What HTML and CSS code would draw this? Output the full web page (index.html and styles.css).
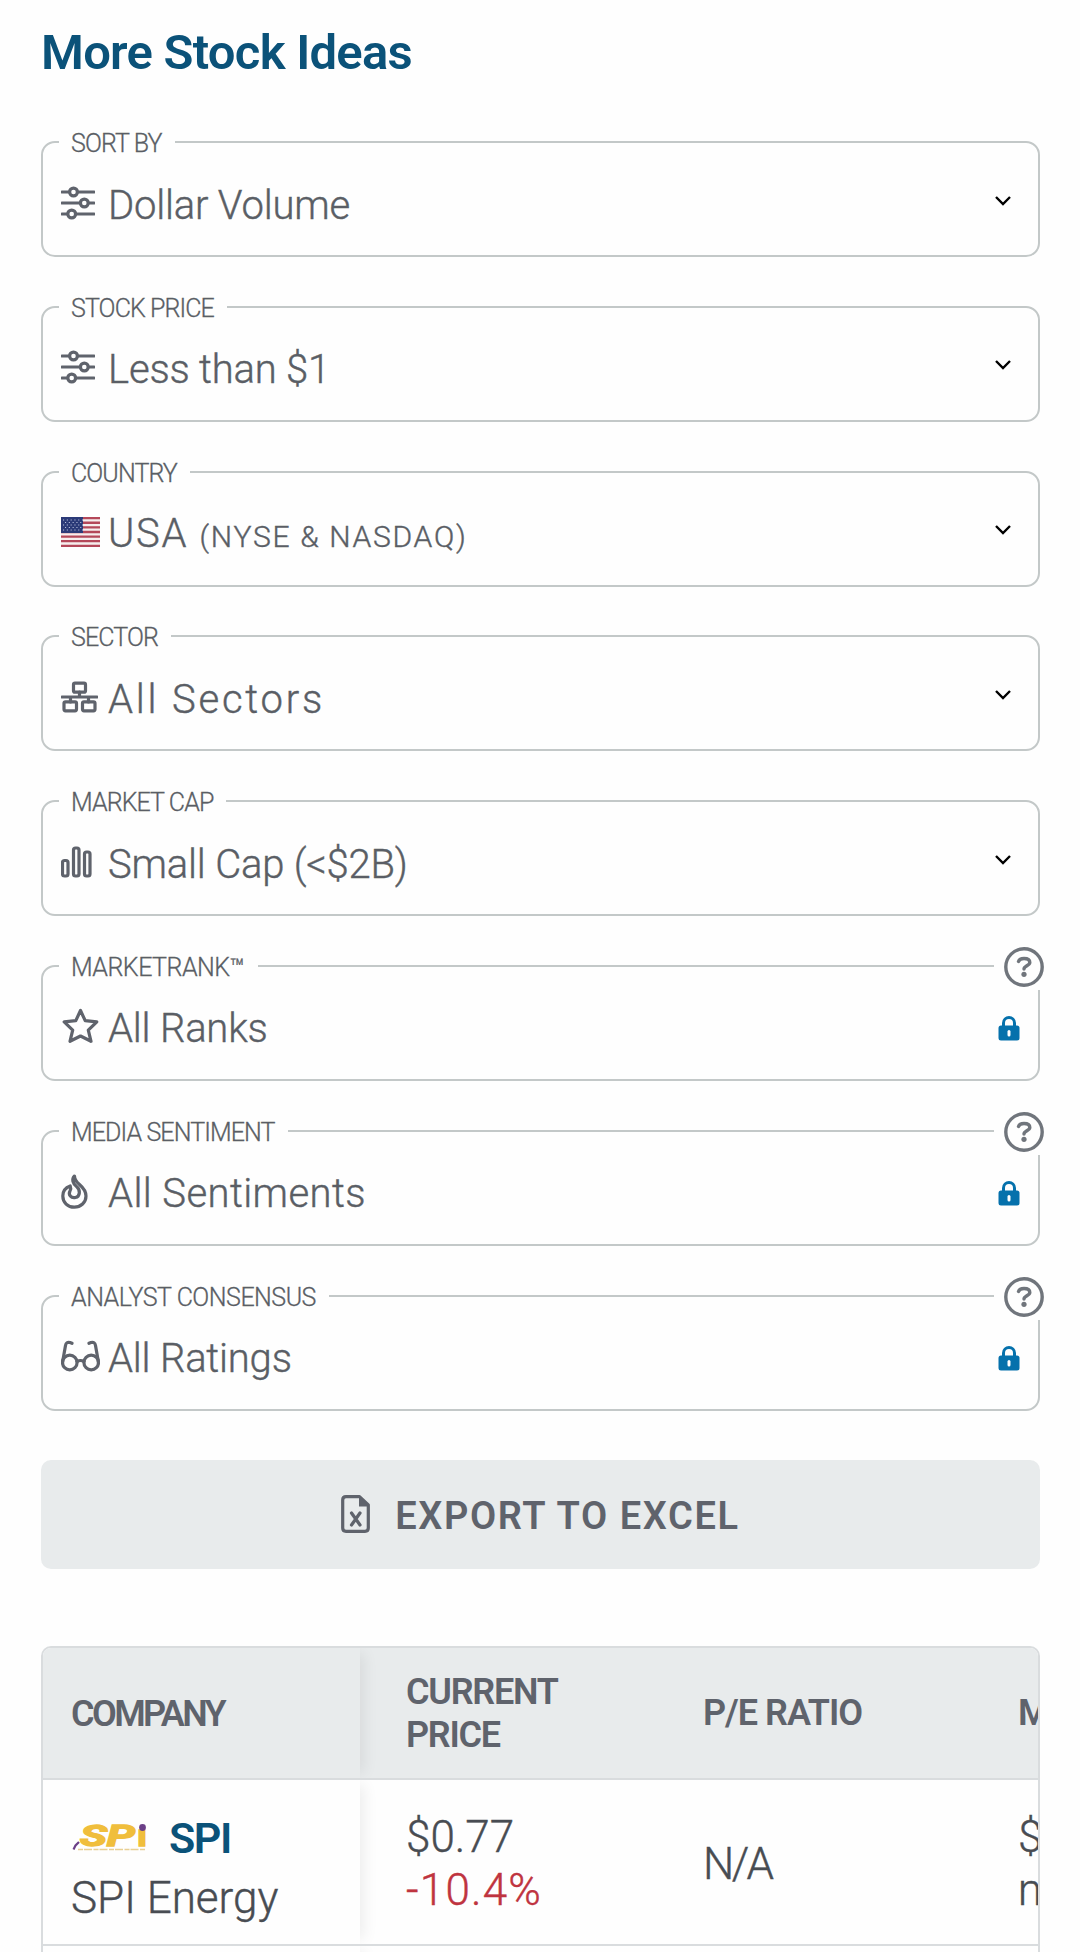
FILE: index.html
```
<!DOCTYPE html>
<html lang="en">
<head>
  <meta charset="utf-8">
  <meta name="viewport" content="width=device-width, initial-scale=1.0">
  <title>More Stock Ideas</title>
  <link rel="stylesheet" href="styles.css">
</head>

<body>
<h2>More Stock Ideas</h2>

<form class="filters">
  <fieldset class="filter">
    <legend>SORT BY</legend>
    <div class="filter-row">
      <span class="filter-icon">
        <svg width="34" height="34" viewBox="0 0 34 34" class="line-icon">
          <path d="M1 6h7.500M17 6h16M1 17h17.500M28 17h5M1 28h5.500M15 28h18"/>
          <circle cx="12.500" cy="6" r="3.900"/><circle cx="23.300" cy="17" r="3.900"/><circle cx="10.700" cy="28" r="3.900"/>
        </svg>
      </span>
      <span class="filter-value">Dollar Volume</span>
      <svg class="chevron" width="18" height="12" viewBox="0 0 18 12"><path d="M2 2l7 7 7-7"/></svg>
    </div>
  </fieldset>

  <fieldset class="filter">
    <legend>STOCK PRICE</legend>
    <div class="filter-row">
      <span class="filter-icon">
        <svg width="34" height="34" viewBox="0 0 34 34" class="line-icon">
          <path d="M1 6h7.500M17 6h16M1 17h17.500M28 17h5M1 28h5.500M15 28h18"/>
          <circle cx="12.500" cy="6" r="3.900"/><circle cx="23.300" cy="17" r="3.900"/><circle cx="10.700" cy="28" r="3.900"/>
        </svg>
      </span>
      <span class="filter-value">Less than $1</span>
      <svg class="chevron" width="18" height="12" viewBox="0 0 18 12"><path d="M2 2l7 7 7-7"/></svg>
    </div>
  </fieldset>

  <fieldset class="filter">
    <legend>COUNTRY</legend>
    <div class="filter-row">
      <span class="filter-icon">
        <svg width="39" height="30" viewBox="0 0 39 30">
          <rect width="39" height="30" fill="#f6eeee"/>
          <path d="M0 1.150h39M0 5.750h39M0 10.350h39M0 15h39M0 19.600h39M0 24.200h39M0 28.850h39" stroke="#b4485a" stroke-width="2.300"/>
          <rect width="22" height="16" fill="#2b3a78"/>
          <path d="M2 3h20M4 5.500h18M2 8h20M4 10.500h18M2 13h20" stroke="#b9c0dc" stroke-width="1.100" stroke-dasharray="1.100 2.700"/>
        </svg>
      </span>
      <span class="filter-value spaced">USA <small>(NYSE &amp; NASDAQ)</small></span>
      <svg class="chevron" width="18" height="12" viewBox="0 0 18 12"><path d="M2 2l7 7 7-7"/></svg>
    </div>
  </fieldset>

  <fieldset class="filter">
    <legend>SECTOR</legend>
    <div class="filter-row">
      <span class="filter-icon">
        <svg width="37" height="32" viewBox="0 0 37 32" class="line-icon">
          <rect x="12.500" y="2.200" width="12" height="9" rx="1.500"/>
          <rect x="3" y="20.800" width="12.500" height="9" rx="1.500"/>
          <rect x="21.500" y="20.800" width="12.500" height="9" rx="1.500"/>
          <path d="M1 16h35M18.500 11v5M9.500 16v5M27.500 16v5"/>
        </svg>
      </span>
      <span class="filter-value sectors">All Sectors</span>
      <svg class="chevron" width="18" height="12" viewBox="0 0 18 12"><path d="M2 2l7 7 7-7"/></svg>
    </div>
  </fieldset>

  <fieldset class="filter">
    <legend>MARKET CAP</legend>
    <div class="filter-row">
      <span class="filter-icon">
        <svg width="31" height="32" viewBox="0 0 31 32" class="line-icon">
          <rect x="1.500" y="14.500" width="5.500" height="15.500" rx="2"/>
          <rect x="12.500" y="2" width="5.500" height="28" rx="2"/>
          <rect x="23.500" y="6" width="5.500" height="24" rx="2"/>
        </svg>
      </span>
      <span class="filter-value">Small Cap (&lt;$2B)</span>
      <svg class="chevron" width="18" height="12" viewBox="0 0 18 12"><path d="M2 2l7 7 7-7"/></svg>
    </div>
  </fieldset>

  <fieldset class="filter">
    <legend class="wide">MARKETRANK™</legend>
    <span class="help">
      <svg width="40" height="40" viewBox="0 0 40 40">
        <circle cx="20" cy="20" r="18.200"/>
        <path d="M14.500 14.500c.8-2.300 2.200-3 5.500-3 3.600 0 5.800 1.500 5.800 4 0 3-5.800 3.600-5.800 6.500"/>
        <circle class="dot" cx="20" cy="27.300" r="2.600"/>
      </svg>
    </span>
    <div class="filter-row">
      <span class="filter-icon">
        <svg width="38" height="36" viewBox="0 0 38 36" class="line-icon">
          <path d="M19.500 2.500l4.700 10.200 11.600 1.200-8.500 8.200 2.700 11.200-10.500-5.300-10.500 5.300 2.700-11.200-8.500-8.200 11.600-1.200z"/>
        </svg>
      </span>
      <span class="filter-value">All Ranks</span>
      <svg class="lock" width="22" height="25" viewBox="0 0 22 25">
        <path d="M5.500 11V7a5.500 5.500 0 0 1 11 0v4" fill="none" stroke="#0571ac" stroke-width="3"/>
        <path d="M3 9.500h16q2.500 0 2.500 2.500v10q0 2.500-2.500 2.500H3q-2.500 0-2.500-2.500V12q0-2.500 2.500-2.500z" fill="#0571ac"/>
        <rect x="9.500" y="14" width="3" height="6.500" rx="1.500" fill="#fff"/>
      </svg>
    </div>
  </fieldset>

  <fieldset class="filter">
    <legend>MEDIA SENTIMENT</legend>
    <span class="help">
      <svg width="40" height="40" viewBox="0 0 40 40">
        <circle cx="20" cy="20" r="18.200"/>
        <path d="M14.500 14.500c.8-2.300 2.200-3 5.500-3 3.600 0 5.800 1.500 5.800 4 0 3-5.800 3.600-5.800 6.500"/>
        <circle class="dot" cx="20" cy="27.300" r="2.600"/>
      </svg>
    </span>
    <div class="filter-row">
      <span class="filter-icon">
        <svg width="27" height="35" viewBox="0 0 27 35" class="line-icon">
          <path d="M13.500 2c-3 3-2 7.500 2.500 11 3.500 3 3.200 9.500-1.500 10.500-4.500 1-7.500-3-5.500-6.500 1-1.800 1-3.200.2-5C5 13.500 1.800 17 1.800 22c0 6.500 5 11.200 11.500 11.200S25 28.500 25 22c0-4.500-2.500-8-6.500-11.500C15.500 8 13.500 6 13.500 2z"/>
        </svg>
      </span>
      <span class="filter-value sentiments">All Sentiments</span>
      <svg class="lock" width="22" height="25" viewBox="0 0 22 25">
        <path d="M5.500 11V7a5.500 5.500 0 0 1 11 0v4" fill="none" stroke="#0571ac" stroke-width="3"/>
        <path d="M3 9.500h16q2.500 0 2.500 2.500v10q0 2.500-2.500 2.500H3q-2.500 0-2.500-2.500V12q0-2.500 2.500-2.500z" fill="#0571ac"/>
        <rect x="9.500" y="14" width="3" height="6.500" rx="1.500" fill="#fff"/>
      </svg>
    </div>
  </fieldset>

  <fieldset class="filter">
    <legend class="wide">ANALYST CONSENSUS</legend>
    <span class="help">
      <svg width="40" height="40" viewBox="0 0 40 40">
        <circle cx="20" cy="20" r="18.200"/>
        <path d="M14.500 14.500c.8-2.300 2.200-3 5.500-3 3.600 0 5.800 1.500 5.800 4 0 3-5.800 3.600-5.800 6.500"/>
        <circle class="dot" cx="20" cy="27.300" r="2.600"/>
      </svg>
    </span>
    <div class="filter-row">
      <span class="filter-icon">
        <svg width="39" height="32" viewBox="0 0 39 32" class="line-icon">
          <circle cx="8.800" cy="22.500" r="7.300"/><circle cx="30.200" cy="22.500" r="7.300"/>
          <path d="M16 21.500q3.500-2 7 0M1.500 22.500L4.500 5.500Q5.200 1.500 9 2.500l2 .8M37.500 22.500L34.500 5.500Q33.800 1.500 30 2.500l-2 .8"/>
        </svg>
      </span>
      <span class="filter-value">All Ratings</span>
      <svg class="lock" width="22" height="25" viewBox="0 0 22 25">
        <path d="M5.500 11V7a5.500 5.500 0 0 1 11 0v4" fill="none" stroke="#0571ac" stroke-width="3"/>
        <path d="M3 9.500h16q2.500 0 2.500 2.500v10q0 2.500-2.500 2.500H3q-2.500 0-2.500-2.500V12q0-2.500 2.500-2.500z" fill="#0571ac"/>
        <rect x="9.500" y="14" width="3" height="6.500" rx="1.500" fill="#fff"/>
      </svg>
    </div>
  </fieldset>

  <button type="button" class="export">
    <svg width="29" height="38" viewBox="0 0 29 38" class="line-icon">
      <path d="M18.500 1.700H5Q1.700 1.700 1.700 5v28Q1.700 36.300 5 36.300h19Q27.300 36.300 27.300 33V10z"/>
      <path d="M18 2v9.500h9.500z" fill="#5f636c" stroke="none"/>
      <path d="M10.500 18l8.500 12M19 18l-8.500 12"/>
    </svg>
    <span>EXPORT TO EXCEL</span>
  </button>
</form>

<div class="stocks">
  <div class="stocks-row stocks-head">
    <div class="company">COMPANY</div>
    <div>CURRENT<br>PRICE</div>
    <div class="ratio">P/E RATIO</div>
    <div>MARKET CAP</div>
  </div>
  <div class="stocks-row">
    <div class="company">
      <div class="ticker">
        <svg class="logo" width="78" height="30" viewBox="0 0 78 30">
          <text x="9" y="23" textLength="55" lengthAdjust="spacingAndGlyphs" class="logo-text">SP</text>
          <text x="66" y="23" textLength="10" lengthAdjust="spacingAndGlyphs" class="logo-text upright">ı</text>
          <circle cx="71.500" cy="4.500" r="3.400" fill="#6b3f87"/>
          <path d="M2.500 26.500l2-4 3.500-3.500" fill="none" stroke="#6b3f87" stroke-width="2.200"/>
          <path d="M7 26.500h67" stroke="#e8cf93" stroke-width="1.600" stroke-dasharray="5 1 8 1.500"/>
        </svg>
        <a>SPI</a>
      </div>
      SPI Energy
    </div>
    <div>$0.77<br><span class="loss">-10.4%</span></div>
    <div class="na">N/A</div>
    <div>$25.0<br>million</div>
  </div>
  <div class="stocks-row">
    <div class="company"></div>
  </div>
</div>
</body>
</html>
```
FILE: styles.css
```
* {
  box-sizing: border-box;
}
body {
  margin: 0;
  padding: 24px 40px 0 41px;
  height: 1952px;
  overflow: hidden;
  background: #fefefe;
  color: #5a5e65;
  font-family: Roboto, sans-serif;
  font-weight: 300;
}
h2 {
  margin: 0 0 43px;
  font-size: 49px;
  line-height: 58px;
  font-weight: 600;
  letter-spacing: -.75px;
  color: #0b5279;
}
.filter {
  position: relative;
  height: 132px;
  margin: 0 0 32.8px;
  padding: 0 26px 0 18px;
  border: 2px solid #c3c8c8;
  border-radius: 14px;
}
.filter legend {
  margin-left: -2px;
  padding: 4px 13px 0 12px;
  font-size: 25px;
  line-height: 30px;
  letter-spacing: -.9px;
  -webkit-text-stroke: .3px;
}
.filter legend.wide {
  letter-spacing: -.5px;
}
.filter-row {
  display: flex;
  align-items: center;
  height: 90px;
}
.filter-icon {
  display: flex;
  width: 47px;
  margin-top: -3px;
}
.filter-value {
  flex: 1;
  padding-top: 3px;
  font-size: 40px;
  line-height: 48px;
  letter-spacing: -.2px;
  -webkit-text-stroke: .4px;
}
.filter-value.spaced {
  letter-spacing: 1.700px;
}
.filter-value.sectors {
  letter-spacing: 2.800px;
}
.filter-value.sentiments {
  letter-spacing: .4px;
}
.filter-value small {
  font-size: 30px;
}
.line-icon {
  fill: none;
  stroke: #5f636c;
  stroke-width: 3.200;
  stroke-linecap: round;
  stroke-linejoin: round;
}
.chevron {
  margin-top: -7px;
  fill: none;
  stroke: #000;
  stroke-width: 2.400;
}
.lock {
  margin: 2px -8px 0 0;
}

/* sits over the corner of the box and hides its border */
.help {
  position: absolute;
  top: -22px;
  right: -10px;
  margin-top: -14px;
  padding: 0 4px 3px 10px;
  background: #fefefe;
}
.help svg {
  display: block;
  fill: none;
  stroke: #70757c;
  stroke-width: 3.400;
  stroke-linecap: round;
}
.help .dot {
  fill: #70757c;
  stroke: none;
}

.export {
  display: flex;
  align-items: center;
  justify-content: center;
  gap: 25px;
  width: 100%;
  height: 109px;
  margin-top: 49px;
  border: 0;
  border-radius: 10px;
  background: #e8ebec;
  color: #5f636c;
  font: 600 38px/46px Roboto, sans-serif;
  letter-spacing: 1.600px;
}
.export span {
  padding-top: 3px;
}

.stocks {
  height: 320px;
  margin-top: 77px;
  border: 2px solid #d9dcde;
  border-radius: 10px 10px 0 0;
  overflow: hidden;
  color: #484c52;
  font-size: 44px;
  line-height: 53px;
}
.stocks-row {
  display: grid;
  grid-template-columns: 317px 297px 315px 300px;
  height: 166px;
  border-bottom: 2px solid #d9dcde;
  overflow: hidden;
  white-space: nowrap;
  -webkit-text-stroke: .4px;
}
.stocks-row > div {
  display: grid;
  align-content: center;
  padding: 5px 0 0 46px;
}
.stocks-row > .company {
  padding: 12px 0 0 28px;
  line-height: 60px;
  box-shadow: 9px 0 14px -5px rgba(0, 0, 0, .07);
}
.stocks-head {
  height: 132px;
  background: #e8ebec;
  color: #5f636c;
  font-size: 36px;
  font-weight: 600;
  line-height: 43px;
  letter-spacing: -1.250px;
  -webkit-text-stroke: 0;
}
.stocks-head > div,
.stocks-head > .company {
  padding-top: 2px;
}
.stocks-head > .company {
  letter-spacing: -2.600px;
}
.stocks-head > .ratio {
  letter-spacing: -1px;
}
.ticker {
  display: flex;
  align-items: center;
  gap: 20px;
}
.ticker a {
  font-size: 43px;
  font-weight: 600;
  letter-spacing: -1.400px;
  color: #0b5279;
  -webkit-text-stroke: 0;
}
.logo {
  overflow: visible;
}
.logo-text {
  font: italic 700 29px Roboto, sans-serif;
  fill: #f0be3c;
  stroke: #f0be3c;
  stroke-width: 1.400;
  -webkit-text-stroke: 1.400px #f0be3c;
}
.logo-text.upright {
  font-style: normal;
}
.loss {
  color: #bf3440;
  letter-spacing: 1.200px;
}
.stocks-row > .na {
  letter-spacing: -2.600px;
}
```
